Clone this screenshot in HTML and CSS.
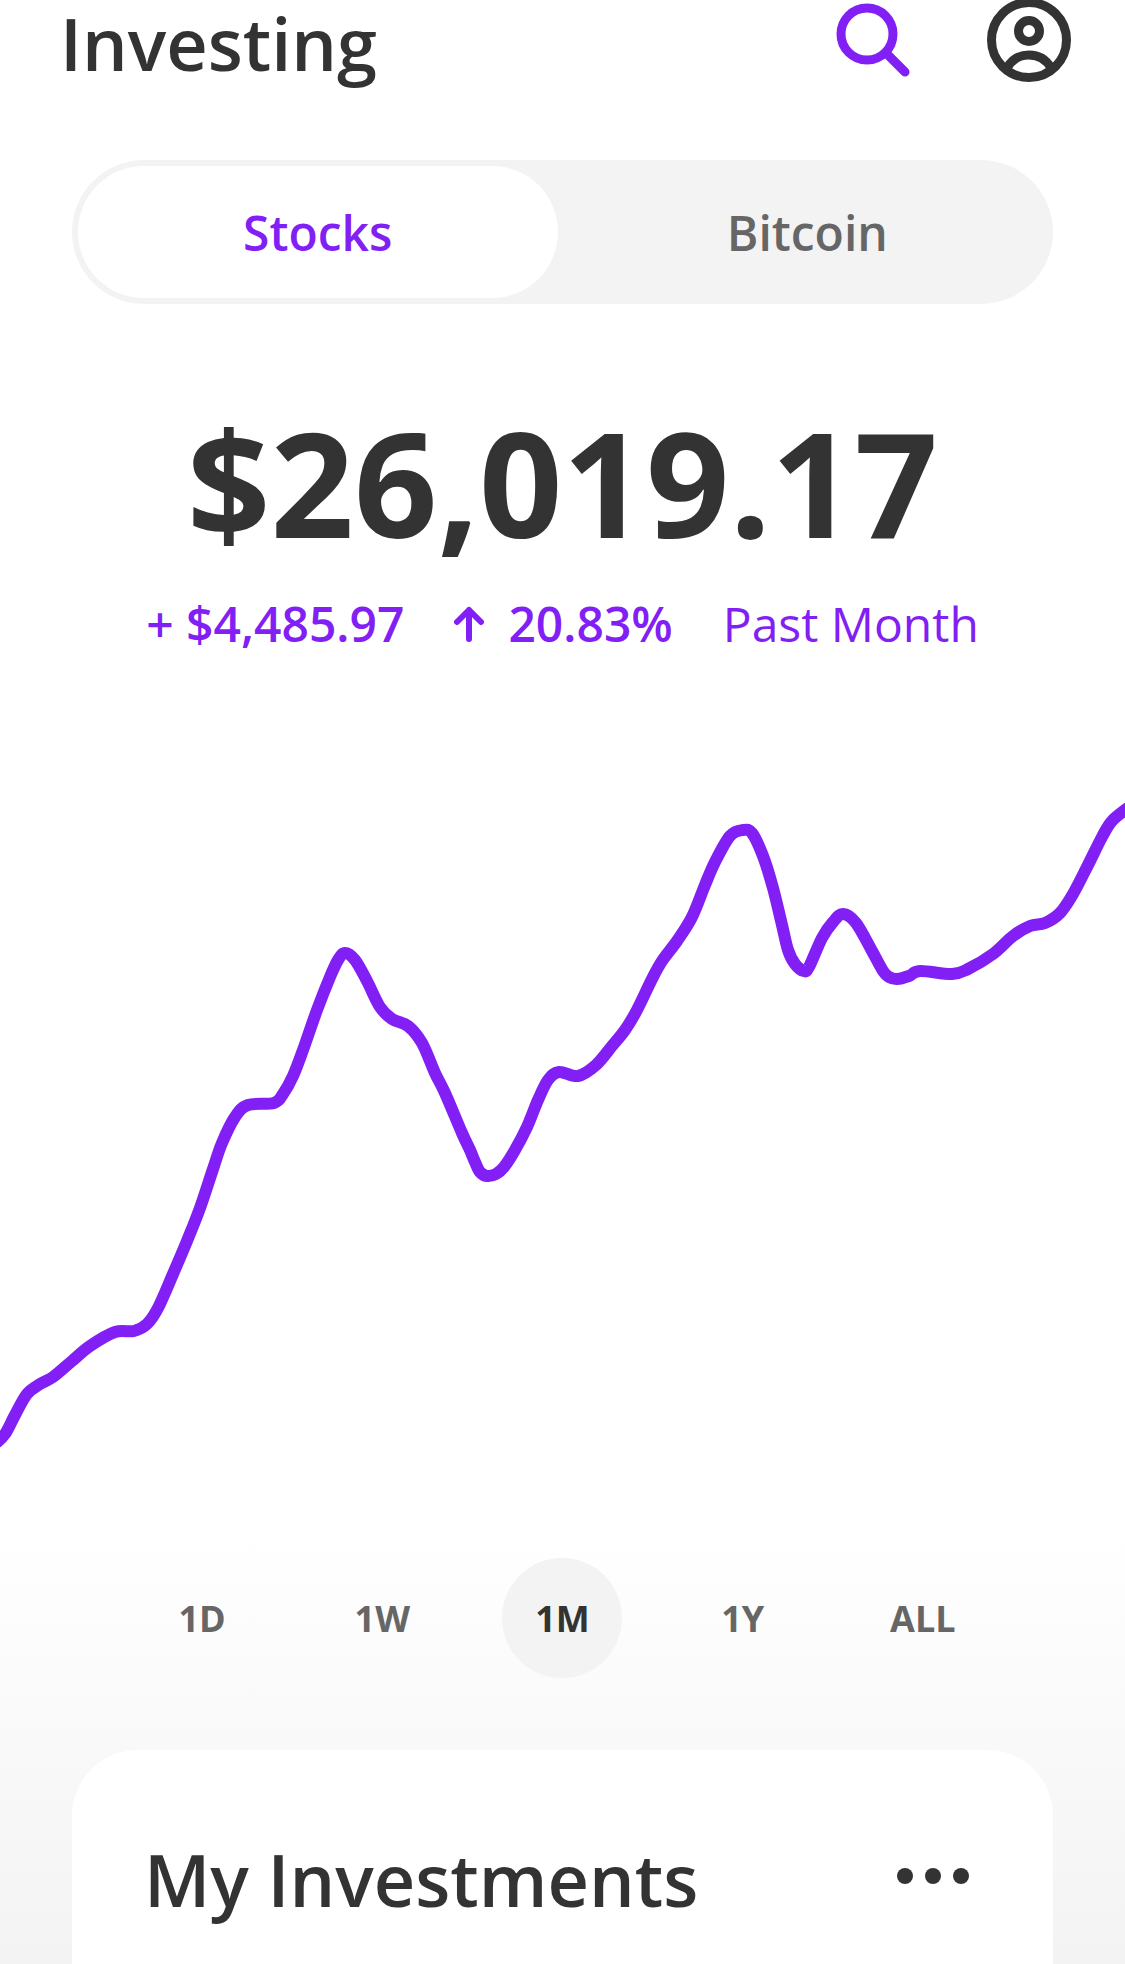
FILE: index.html
```html
<!DOCTYPE html>
<html lang="en">
<head>
    <meta charset="UTF-8">
    <meta name="viewport" content="width=device-width, initial-scale=1.0">
    <title>Investing</title>
    <link rel="stylesheet" href="styles.css">
</head>
<body>
    <header class="header">
        <h1>Investing</h1>
        <div class="actions">
            <button class="icon-btn search" aria-label="Search">
                <svg width="84" height="84" viewBox="0 0 84 84" fill="none" stroke="currentColor" stroke-width="9" stroke-linecap="round">
                    <circle cx="36" cy="36" r="26"/>
                    <path d="M55 55L74 74"/>
                </svg>
            </button>
            <button class="icon-btn" aria-label="Profile">
                <svg width="84" height="84" viewBox="0 0 84 84" fill="none" stroke="currentColor" stroke-width="9">
                    <circle cx="42" cy="42" r="37.5"/>
                    <circle cx="42" cy="33" r="10.5"/>
                    <path d="M20 70C25 61 33 57 42 57S59 61 64 70"/>
                </svg>
            </button>
        </div>
    </header>

    <div class="tabs">
        <button class="tab active">Stocks</button>
        <button class="tab">Bitcoin</button>
    </div>

    <div class="balance">
        <p class="amount">$26,019.17</p>
        <div class="change">
            <strong>+ $4,485.97</strong>
            <strong class="percent">
                <svg width="30" height="36" viewBox="0 0 30 36" fill="none" stroke="currentColor" stroke-width="6" stroke-linecap="round" stroke-linejoin="round">
                    <path d="M15 33V4M3 16L15 4L27 16"/>
                </svg>
                20.83%
            </strong>
            <span>Past Month</span>
        </div>
    </div>

    <svg class="chart" viewBox="0 0 1125 750" role="img" aria-label="Portfolio value, past month">
        <path id="line"/>
    </svg>

    <div class="bottom">
        <div class="ranges">
            <button>1D</button>
            <button>1W</button>
            <button class="active">1M</button>
            <button>1Y</button>
            <button>ALL</button>
        </div>
        <section class="card">
            <h2>My Investments</h2>
            <button class="icon-btn" aria-label="More">
                <svg width="72" height="16" viewBox="0 0 72 16" fill="currentColor">
                    <circle cx="8" cy="8" r="8"/>
                    <circle cx="36" cy="8" r="8"/>
                    <circle cx="64" cy="8" r="8"/>
                </svg>
            </button>
        </section>
    </div>

    <script>
        let points = [
            [-4, 663], [5, 654], [15, 635], [27, 614], [40, 604], [53, 597], [72, 581], [90, 566],
            [115, 552], [134, 551], [147, 544], [158, 528], [173, 494], [187, 461], [200, 428],
            [213, 389], [222, 363], [235, 337], [248, 325], [274, 323], [283, 314], [293, 296],
            [303, 270], [317, 230], [330, 197], [338, 180], [345, 173], [355, 180], [367, 201],
            [380, 227], [392, 239], [408, 246], [422, 263], [435, 293], [445, 313], [462, 353],
            [470, 370], [475, 382], [480, 392], [487, 396], [496, 394], [504, 387], [515, 370],
            [527, 347], [538, 320], [548, 300], [559, 292], [578, 296], [596, 285], [612, 266],
            [625, 250], [637, 230], [652, 199], [662, 181], [677, 161], [692, 137], [705, 105],
            [715, 82], [730, 56], [743, 50], [752, 53], [763, 76], [773, 108], [782, 145],
            [788, 170], [795, 184], [804, 191], [809, 187], [822, 158], [833, 142], [843, 134],
            [856, 143], [872, 171], [883, 191], [889, 197], [897, 199], [909, 196], [920, 191],
            [952, 194], [968, 189], [993, 174], [1013, 156], [1030, 146], [1045, 143], [1060, 133],
            [1073, 114], [1088, 85], [1102, 57], [1112, 41], [1129, 27]
        ];

        // smooth curve through every point
        let d = "M" + points[0];
        for (let i = 0; i < points.length - 1; i++) {
            let p0 = points[i - 1] || points[i];
            let p1 = points[i];
            let p2 = points[i + 1];
            let p3 = points[i + 2] || p2;
            d += "C" + [
                p1[0] + (p2[0] - p0[0]) / 6, p1[1] + (p2[1] - p0[1]) / 6,
                p2[0] - (p3[0] - p1[0]) / 6, p2[1] - (p3[1] - p1[1]) / 6,
                p2[0], p2[1]
            ];
        }
        document.getElementById("line").setAttribute("d", d);
    </script>
</body>
</html>
```

FILE: styles.css
```css
* {
    box-sizing: border-box;
}

body {
    margin: 0;
    min-height: 100vh;
    display: flex;
    flex-direction: column;
    font-family: "Open Sans", "Liberation Sans", sans-serif;
    color: #333;
    background: #fff;
}

h1, h2, p {
    margin: 0;
}

h1, h2 {
    font-size: 72px;
    line-height: 86px;
    font-weight: 600;
}

strong {
    font-weight: 600;
}

button {
    border: none;
    padding: 0;
    background: none;
    font-family: inherit;
    font-weight: 600;
    color: #666;
    cursor: pointer;
}

.icon-btn {
    color: #333;
}

.icon-btn svg {
    display: block;
}

.header {
    height: 88px;
    display: flex;
    justify-content: space-between;
    align-items: flex-start;
    padding: 0 54px 0 60px;
}

.actions {
    display: flex;
    gap: 72px;
    margin-top: -2px;
}

.search {
    color: #821ff5;
}

.tabs {
    display: flex;
    gap: 10px;
    margin: 72px 72px 0;
    padding: 6px;
    border-radius: 72px;
    background: #f3f3f3;
}

.tab {
    flex: 1;
    height: 132px;
    border-radius: 66px;
    font-size: 48px;
}

.tab.active {
    background: #fff;
    color: #821ff5;
}

.balance {
    padding-top: 90px;
    text-align: center;
}

.amount {
    font-size: 146px;
    line-height: 176px;
    font-weight: bold;
}

.change {
    display: flex;
    justify-content: center;
    gap: 50px;
    margin-top: 22px;
    font-size: 48px;
    line-height: 64px;
    color: #821ff5;
}

.percent {
    display: flex;
    align-items: center;
    gap: 24px;
}

.chart {
    display: block;
    width: 100%;
    margin-top: 124px;
}

#line {
    fill: none;
    stroke: #821ff5;
    stroke-width: 12;
    stroke-linejoin: round;
}

.bottom {
    flex: 1;
    display: flex;
    flex-direction: column;
    padding: 28px 72px 0;
    background: linear-gradient(#fff, #f3f3f3);
}

.ranges {
    display: flex;
    justify-content: space-around;
    padding: 0 40px;
}

.ranges button {
    width: 120px;
    height: 120px;
    border-radius: 50%;
    font-size: 36px;
    font-weight: bold;
}

.ranges .active {
    background: #f3f3f3;
    color: #333;
}

.card {
    flex: 1;
    display: flex;
    justify-content: space-between;
    align-items: flex-start;
    margin-top: 72px;
    padding: 86px 84px 40px 72px;
    border-radius: 66px 66px 0 0;
    background: #fff;
}

.card .icon-btn {
    padding: 32px 0;
}
```
